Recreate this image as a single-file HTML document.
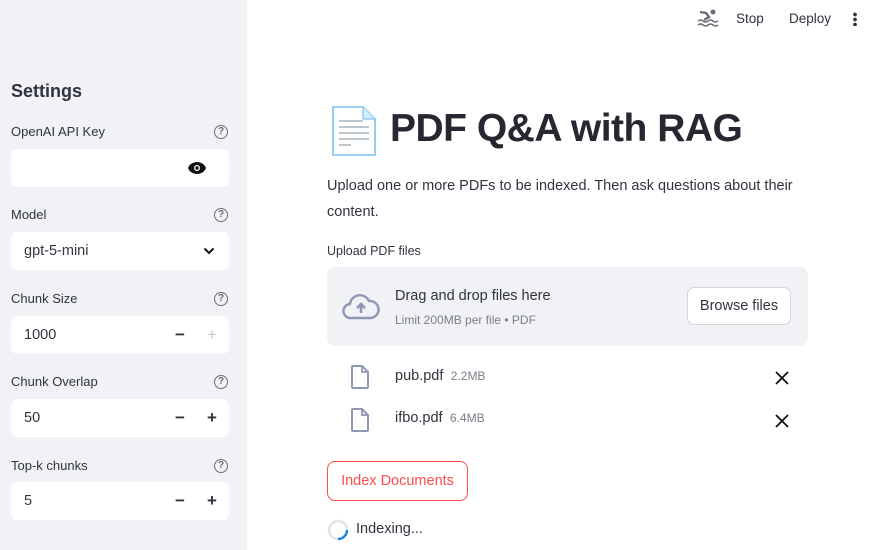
<!DOCTYPE html>
<html><head><meta charset="utf-8"><style>
*{box-sizing:border-box;margin:0;padding:0}
body{width:880px;height:550px;overflow:hidden;font-family:"Liberation Sans",sans-serif;color:#31333f;background:#fff;position:relative}
.sb{position:absolute;left:0;top:0;width:247px;height:550px;background:#f0f2f6}
.a{position:absolute}
.lbl{font-size:13px;color:#31333f}
.q{position:absolute;left:214px;width:14px;height:14px;border:1.4px solid #6b6d76;border-radius:50%;font-size:10px;font-weight:bold;color:#6b6d76;text-align:center;line-height:11px}
.in{position:absolute;left:11px;width:218px;height:38px;background:#fff;border-radius:7px;font-size:14.5px;padding-left:13px;line-height:38px}
.pm{position:absolute;font-size:17px;font-weight:bold;top:0;line-height:38px}
</style></head><body>
<div class="sb">
<div class="a" style="left:11px;top:81px;font-size:18px;font-weight:bold">Settings</div>

<div class="a lbl" style="left:11px;top:124px">OpenAI API Key</div><div class="q" style="top:125px">?</div>
<div class="in" style="top:149px"><svg class="a" style="left:176px;top:12px" width="20" height="14" viewBox="0 0 20 14"><path d="M10 1C5.5 1 2 4 1 7c1 3 4.5 6 9 6s8-3 9-6c-1-3-4.5-6-9-6z" fill="#111"/><circle cx="10" cy="7" r="3" fill="#fff"/><circle cx="10" cy="7" r="1.7" fill="#111"/></svg></div>

<div class="a lbl" style="left:11px;top:207px">Model</div><div class="q" style="top:208px">?</div>
<div class="in" style="top:232px">gpt-5-mini<svg class="a" style="left:192px;top:15px" width="12" height="8" viewBox="0 0 12 8"><path d="M1.5 1.5L6 6l4.5-4.5" stroke="#111" stroke-width="2" fill="none"/></svg></div>

<div class="a lbl" style="left:11px;top:291px">Chunk Size</div><div class="q" style="top:292px">?</div>
<div class="in" style="top:316px">1000<span class="pm" style="left:164px">−</span><span class="pm" style="left:196px;color:#c8cad0;font-weight:normal">+</span></div>

<div class="a lbl" style="left:11px;top:374px">Chunk Overlap</div><div class="q" style="top:375px">?</div>
<div class="in" style="top:399px">50<span class="pm" style="left:164px">−</span><span class="pm" style="left:196px">+</span></div>

<div class="a lbl" style="left:11px;top:458px">Top-k chunks</div><div class="q" style="top:459px">?</div>
<div class="in" style="top:482px">5<span class="pm" style="left:164px">−</span><span class="pm" style="left:196px">+</span></div>
</div>

<svg class="a" style="left:697px;top:8px" width="22" height="20" viewBox="0 0 22 20"><circle cx="16" cy="4" r="2.5" fill="#6b6d76"/><path d="M3 4l6 1 3 4-5 3" stroke="#6b6d76" stroke-width="2.4" fill="none"/><path d="M1 13q2.5-2 5 0t5 0 5 0 5 0M1 17q2.5-2 5 0t5 0 5 0 5 0" stroke="#6b6d76" stroke-width="1.5" fill="none"/></svg>
<div class="a" style="left:736px;top:11px;font-size:13.5px">Stop</div>
<div class="a" style="left:789px;top:11px;font-size:13.5px">Deploy</div>
<div class="a" style="left:853px;top:12px;width:4px;height:14px;background:radial-gradient(circle,#31333f 1.7px,transparent 2px) 0 0/4px 5px"></div>

<svg class="a" style="left:332px;top:106px" width="44" height="50" viewBox="0 0 44 50"><path d="M1 1h30l12 12v36H1z" fill="#fff" stroke="#7cc0f0" stroke-width="1.6"/><path d="M31 1v12h12" fill="#d6ecfb" stroke="#7cc0f0" stroke-width="1.2"/><path d="M7 15h24M7 21h30M7 27h30M7 33h30M7 39h12" stroke="#a8b4bd" stroke-width="1.6"/></svg>
<div class="a" style="left:390px;top:107px;font-size:39px;font-weight:bold;letter-spacing:-0.5px;white-space:nowrap;color:#262730">PDF Q&amp;A with RAG</div>

<div class="a" style="left:327px;top:173px;width:490px;font-size:14.5px;line-height:26px">Upload one or more PDFs to be indexed. Then ask questions about their content.</div>
<div class="a" style="left:327px;top:244px;font-size:12.5px">Upload PDF files</div>

<div class="a" style="left:327px;top:267px;width:481px;height:79px;background:#f0f2f6;border-radius:8px">
<svg class="a" style="left:15px;top:25px" width="38" height="28" viewBox="0 0 38 28"><path d="M10 26H9a7 7 0 0 1-1-14 10 10 0 0 1 19-3 8 8 0 0 1 2 17z" fill="none" stroke="#8e98b5" stroke-width="2.4"/><path d="M19 21v-8M15 16l4-4 4 4" stroke="#8e98b5" stroke-width="2.6" fill="none"/></svg>
<div class="a" style="left:68px;top:21px;font-size:14.5px">Drag and drop files here</div>
<div class="a" style="left:68px;top:46px;font-size:12px;color:#7b7e88">Limit 200MB per file • PDF</div>
<div class="a" style="left:360px;top:20px;width:104px;height:38px;background:#fff;border:1px solid #d4d6dc;border-radius:7px;font-size:14.5px;text-align:center;line-height:36px">Browse files</div>
</div>

<svg class="a" style="left:351px;top:365px" width="18" height="24" viewBox="0 0 18 24"><path d="M2 1h9l6 6v15a1 1 0 0 1-1 1H2a1 1 0 0 1-1-1V2a1 1 0 0 1 1-1z" fill="none" stroke="#8e98b5" stroke-width="2"/><path d="M11 1v6h6" fill="none" stroke="#8e98b5" stroke-width="1.8"/></svg>
<div class="a" style="left:395px;top:368px;font-size:14.5px">pub.pdf <span style="font-size:12px;color:#7b7e88">&nbsp;2.2MB</span></div>
<svg class="a" style="left:775px;top:371px" width="14" height="14"><path d="M1 1l12 12M13 1L1 13" stroke="#111" stroke-width="1.8"/></svg>

<svg class="a" style="left:351px;top:408px" width="18" height="24" viewBox="0 0 18 24"><path d="M2 1h9l6 6v15a1 1 0 0 1-1 1H2a1 1 0 0 1-1-1V2a1 1 0 0 1 1-1z" fill="none" stroke="#8e98b5" stroke-width="2"/><path d="M11 1v6h6" fill="none" stroke="#8e98b5" stroke-width="1.8"/></svg>
<div class="a" style="left:395px;top:410px;font-size:14.5px">ifbo.pdf <span style="font-size:12px;color:#7b7e88">&nbsp;6.4MB</span></div>
<svg class="a" style="left:775px;top:414px" width="14" height="14"><path d="M1 1l12 12M13 1L1 13" stroke="#111" stroke-width="1.8"/></svg>

<div class="a" style="left:327px;top:461px;width:141px;height:40px;border:1px solid #ff4b4b;border-radius:8px;color:#ff4b4b;font-size:14.5px;text-align:center;line-height:38px">Index Documents</div>

<svg class="a" style="left:327px;top:519px" width="22" height="22" viewBox="0 0 22 22"><circle cx="11" cy="11" r="9" fill="none" stroke="#e2e3e6" stroke-width="2.4"/><path d="M20 11a9 9 0 0 1-9 9" fill="none" stroke="#1c83e1" stroke-width="2.4"/></svg>
<div class="a" style="left:356px;top:521px;font-size:14.5px">Indexing...</div>
</body></html>
